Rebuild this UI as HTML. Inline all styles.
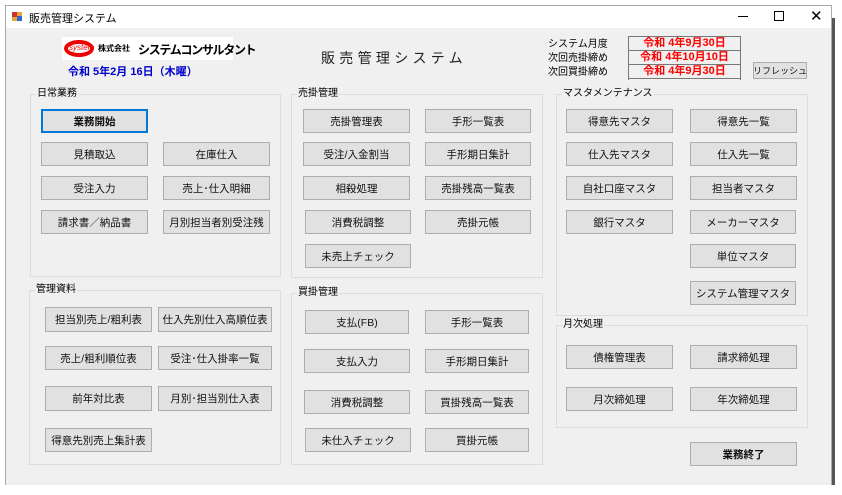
<!DOCTYPE html>
<html><head><meta charset="utf-8"><style>
*{margin:0;padding:0;box-sizing:border-box}
body{width:842px;height:495px;background:#fff;position:relative;overflow:hidden;font-family:"Liberation Sans","Noto Sans CJK JP",sans-serif;font-size:11px;color:#000}
.abs{position:absolute}
.win{left:5px;top:5px;width:827px;height:480px;border:1px solid #aaa;border-bottom:none;background:#f0f0f0}
.tb{left:6px;top:6px;width:825px;height:22px;background:#fff}
.btn{position:absolute;background:#e1e1e1;border:1px solid #adadad;display:flex;align-items:center;justify-content:center;font-size:10.5px;white-space:nowrap;color:#111}
.grp{position:absolute;border:1px solid #dcdcdc}
.gt{position:absolute;background:#f0f0f0;font-size:10px;padding:0 1px;top:-7px;left:5px;line-height:12px}
.red{color:#f00;font-weight:bold;font-size:11px;text-align:center;line-height:13px;border-bottom:1px solid #777}
</style></head><body>
<div class="abs win"></div>
<div class="abs tb"></div>
<div class="abs" style="left:832px;top:0;width:10px;height:485px;background:#fff"></div>
<div class="abs" style="left:832px;top:18px;width:3px;height:467px;background:#555"></div>
<!-- title bar -->
<div class="abs" style="left:12px;top:12px;width:10px;height:9px;background:#e9a33b"></div>
<div class="abs" style="left:12px;top:12px;width:5px;height:5px;background:#c33"></div>
<div class="abs" style="left:17px;top:16px;width:5px;height:5px;background:#36c"></div>
<div class="abs" style="left:29px;top:10px;font-size:11px">販売管理システム</div>
<div class="abs" style="left:738px;top:16px;width:10px;height:1px;background:#000"></div>
<div class="abs" style="left:774px;top:11px;width:10px;height:10px;border:1px solid #000"></div>
<div class="abs" style="left:810px;top:7px;font-size:15px">✕</div>
<!-- logo -->
<div class="abs" style="left:62px;top:37px;width:171px;height:23px;background:#fff"></div>
<div class="abs" style="left:64px;top:40px;width:30px;height:17px;border:4px solid #e00;border-radius:50%"></div>
<div class="abs" style="left:69px;top:43px;font-size:8px;color:#e00;font-style:italic">system</div>
<div class="abs" style="left:98px;top:43px;font-size:8px;font-weight:bold">株式会社</div>
<div class="abs" style="left:138px;top:41px;font-size:12px;font-weight:bold;letter-spacing:-1.3px">システムコンサルタント</div>
<div class="abs" style="left:68px;top:63px;font-size:11px;font-weight:bold;color:#00c">令和 5年2月 16日（木曜）</div>
<div class="abs" style="left:321px;top:48px;font-size:14px;letter-spacing:4.3px;color:#222">販売管理システム</div>
<div class="abs" style="left:548px;top:38px;font-size:10px;line-height:14px">システム月度<br>次回売掛締め<br>次回買掛締め</div>
<div class="abs" style="left:628px;top:36px;width:113px;height:44px;border:1px solid #777;border-bottom:none">
<div class="red">令和 4年9月30日</div><div class="red">令和 4年10月10日</div><div class="red">令和 4年9月30日</div></div>
<div class="btn" style="left:753px;top:62px;width:54px;height:17px;font-size:9px">リフレッシュ</div>
<!-- groups -->
<div class="grp" style="left:30px;top:94px;width:251px;height:183px"><div class="gt">日常業務</div></div>
<div class="grp" style="left:291px;top:94px;width:252px;height:184px"><div class="gt">売掛管理</div></div>
<div class="grp" style="left:556px;top:94px;width:252px;height:222px"><div class="gt">マスタメンテナンス</div></div>
<div class="grp" style="left:29px;top:290px;width:252px;height:175px"><div class="gt">管理資料</div></div>
<div class="grp" style="left:291px;top:293px;width:252px;height:172px"><div class="gt">買掛管理</div></div>
<div class="grp" style="left:556px;top:325px;width:252px;height:103px"><div class="gt">月次処理</div></div>
<!-- 日常 -->
<div class="btn" style="left:41px;top:109px;width:107px;height:24px;border:2px solid #0078d7;font-weight:bold">業務開始</div>
<div class="btn" style="left:41px;top:142px;width:107px;height:24px">見積取込</div>
<div class="btn" style="left:163px;top:142px;width:107px;height:24px">在庫仕入</div>
<div class="btn" style="left:41px;top:176px;width:107px;height:24px">受注入力</div>
<div class="btn" style="left:163px;top:176px;width:107px;height:24px">売上･仕入明細</div>
<div class="btn" style="left:41px;top:210px;width:107px;height:24px">請求書／納品書</div>
<div class="btn" style="left:163px;top:210px;width:107px;height:24px">月別担当者別受注残</div>
<!-- 売掛 -->
<div class="btn" style="left:303px;top:109px;width:107px;height:24px">売掛管理表</div>
<div class="btn" style="left:425px;top:109px;width:106px;height:24px">手形一覧表</div>
<div class="btn" style="left:303px;top:142px;width:107px;height:24px">受注/入金割当</div>
<div class="btn" style="left:425px;top:142px;width:106px;height:24px">手形期日集計</div>
<div class="btn" style="left:303px;top:176px;width:107px;height:24px">相殺処理</div>
<div class="btn" style="left:425px;top:176px;width:106px;height:24px">売掛残高一覧表</div>
<div class="btn" style="left:305px;top:210px;width:106px;height:24px">消費税調整</div>
<div class="btn" style="left:425px;top:210px;width:106px;height:24px">売掛元帳</div>
<div class="btn" style="left:305px;top:244px;width:106px;height:24px">未売上チェック</div>
<!-- マスタ -->
<div class="btn" style="left:566px;top:109px;width:107px;height:24px">得意先マスタ</div>
<div class="btn" style="left:690px;top:109px;width:107px;height:24px">得意先一覧</div>
<div class="btn" style="left:566px;top:142px;width:107px;height:24px">仕入先マスタ</div>
<div class="btn" style="left:690px;top:142px;width:107px;height:24px">仕入先一覧</div>
<div class="btn" style="left:566px;top:176px;width:107px;height:24px">自社口座マスタ</div>
<div class="btn" style="left:690px;top:176px;width:107px;height:24px">担当者マスタ</div>
<div class="btn" style="left:566px;top:210px;width:107px;height:24px">銀行マスタ</div>
<div class="btn" style="left:690px;top:210px;width:106px;height:24px">メーカーマスタ</div>
<div class="btn" style="left:690px;top:244px;width:106px;height:24px">単位マスタ</div>
<div class="btn" style="left:690px;top:281px;width:106px;height:24px">システム管理マスタ</div>
<!-- 管理資料 -->
<div class="btn" style="left:45px;top:307px;width:107px;height:25px">担当別売上/粗利表</div>
<div class="btn" style="left:158px;top:307px;width:114px;height:25px">仕入先別仕入高順位表</div>
<div class="btn" style="left:45px;top:346px;width:107px;height:24px">売上/粗利順位表</div>
<div class="btn" style="left:158px;top:346px;width:114px;height:24px">受注･仕入掛率一覧</div>
<div class="btn" style="left:45px;top:386px;width:107px;height:25px">前年対比表</div>
<div class="btn" style="left:158px;top:386px;width:114px;height:25px">月別･担当別仕入表</div>
<div class="btn" style="left:45px;top:428px;width:107px;height:24px">得意先別売上集計表</div>
<!-- 買掛 -->
<div class="btn" style="left:305px;top:310px;width:104px;height:24px">支払(FB)</div>
<div class="btn" style="left:425px;top:310px;width:104px;height:24px">手形一覧表</div>
<div class="btn" style="left:304px;top:349px;width:106px;height:24px">支払入力</div>
<div class="btn" style="left:425px;top:349px;width:104px;height:24px">手形期日集計</div>
<div class="btn" style="left:304px;top:390px;width:106px;height:24px">消費税調整</div>
<div class="btn" style="left:425px;top:390px;width:104px;height:24px">買掛残高一覧表</div>
<div class="btn" style="left:305px;top:428px;width:106px;height:24px">未仕入チェック</div>
<div class="btn" style="left:425px;top:428px;width:104px;height:24px">買掛元帳</div>
<!-- 月次 -->
<div class="btn" style="left:566px;top:345px;width:107px;height:24px">債権管理表</div>
<div class="btn" style="left:690px;top:345px;width:107px;height:24px">請求締処理</div>
<div class="btn" style="left:566px;top:387px;width:107px;height:24px">月次締処理</div>
<div class="btn" style="left:690px;top:387px;width:107px;height:24px">年次締処理</div>
<div class="btn" style="left:690px;top:442px;width:107px;height:24px;font-weight:bold">業務終了</div>
</body></html>
